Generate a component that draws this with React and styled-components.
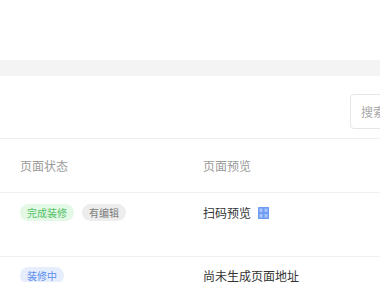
import React from "react";
import styled, { createGlobalStyle } from "styled-components";

const Global = createGlobalStyle`
  html, body { margin: 0; padding: 0; background: #fff; }
  body { font-family: "Noto Sans CJK SC", "Noto Sans", sans-serif; overflow: hidden; }
`;

const Page = styled.div`
  width: 380px;
  height: 282px;
  overflow: hidden;
  display: flex;
  flex-direction: column;
`;

const TopArea = styled.div`
  height: 60px;
  flex-shrink: 0;
  background: #fff;
`;

const Band = styled.div`
  height: 16px;
  flex-shrink: 0;
  background: #f4f4f4;
`;

const Toolbar = styled.div`
  height: 63px;
  flex-shrink: 0;
  display: flex;
  align-items: flex-start;
  padding: 18px 0 0 350px;
  box-sizing: border-box;
  border-bottom: 1px solid #f0f0f0;
`;

const Search = styled.div`
  flex-shrink: 0;
  width: 200px;
  height: 35px;
  box-sizing: border-box;
  border: 1px solid #e6e6e6;
  border-radius: 4px;
  display: flex;
  align-items: center;
  padding-left: 10px;
  font-size: 12px;
  color: #a8a8a8;
`;

const Row = styled.div`
  display: grid;
  grid-template-columns: 183px 1fr;
  height: ${(p) => p.$h}px;
  flex-shrink: 0;
  box-sizing: border-box;
  padding-left: 20px;
  padding-top: ${(p) => p.$pt || 0}px;
  align-items: ${(p) => (p.$center ? "center" : "start")};
  border-bottom: ${(p) => (p.$noBorder ? "none" : "1px solid #f0f0f0")};
`;

const HeadCell = styled.div`
  font-size: 12px;
  color: #9a9a9a;
`;

const Cell = styled.div`
  display: flex;
  align-items: center;
  gap: 8px;
  font-size: 12px;
  color: #333;
  height: 17px;
`;

const tagColors = {
  green: { bg: "#e4f8e6", fg: "#52c265" },
  gray: { bg: "#ededed", fg: "#7a7a7a" },
  blue: { bg: "#e6eefd", fg: "#5b8def" },
};

const Tag = styled.span`
  display: inline-flex;
  align-items: center;
  height: 17px;
  padding: 0 7px;
  border-radius: 9px;
  font-size: 10px;
  background: ${(p) => tagColors[p.$tone].bg};
  color: ${(p) => tagColors[p.$tone].fg};
`;

const PreviewCell = styled(Cell)`
  gap: 7px;
`;

const QrIcon = () => (
  <svg width="11" height="12" viewBox="0 0 11 12" fill="none">
    <rect x="0" y="0" width="11" height="12" rx="0.5" fill="#6e9cf3" />
    <rect x="1.5" y="1.5" width="3" height="3.5" fill="#a9c4f8" />
    <rect x="6.5" y="1.5" width="3" height="3.5" fill="#a9c4f8" />
    <rect x="1.5" y="7" width="3" height="3.5" fill="#a9c4f8" />
    <rect x="6.5" y="7" width="3" height="3.5" fill="#a9c4f8" />
  </svg>
);

export default function App() {
  return (
    <Page>
      <Global />
      <TopArea />
      <Band />
      <Toolbar>
        <Search>搜索页面名称</Search>
      </Toolbar>
      <Row $h={54} $center>
        <HeadCell>页面状态</HeadCell>
        <HeadCell>页面预览</HeadCell>
      </Row>
      <Row $h={64} $pt={11}>
        <Cell>
          <Tag $tone="green">完成装修</Tag>
          <Tag $tone="gray">有编辑</Tag>
        </Cell>
        <PreviewCell>
          扫码预览
          <QrIcon />
        </PreviewCell>
      </Row>
      <Row $h={40} $pt={10} $noBorder>
        <Cell>
          <Tag $tone="blue">装修中</Tag>
        </Cell>
        <Cell>尚未生成页面地址</Cell>
      </Row>
    </Page>
  );
}
